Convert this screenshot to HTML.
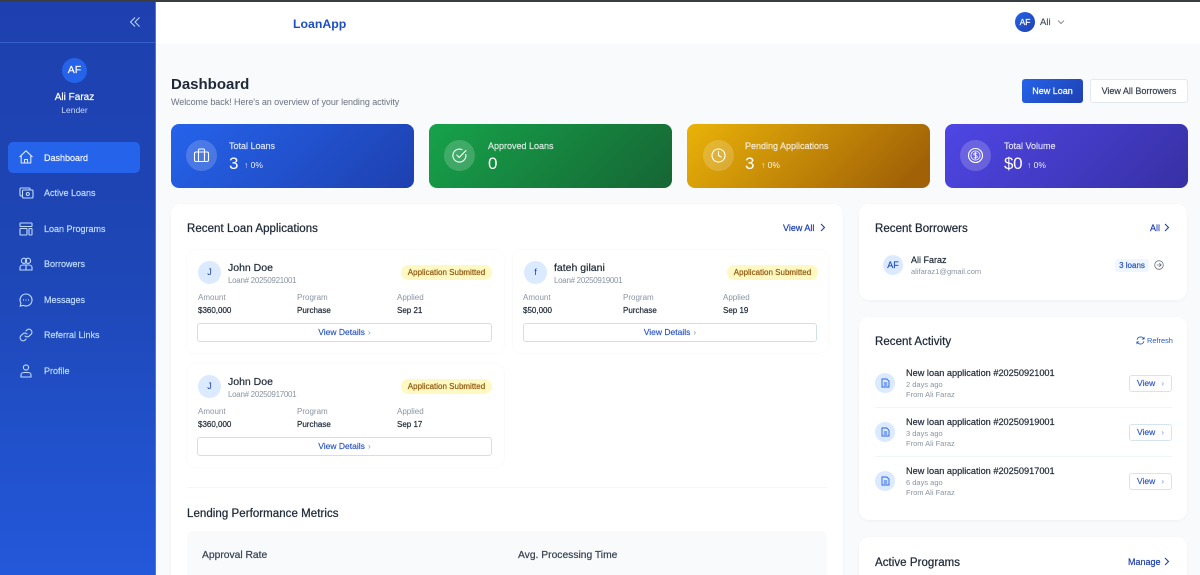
<!DOCTYPE html>
<html><head><meta charset="utf-8"><title>LoanApp Dashboard</title>
<style>
*{box-sizing:border-box;margin:0;padding:0}
html,body{width:1200px;height:575px;overflow:hidden;background:#f8fafc;font-family:"Liberation Sans",sans-serif}
#w{position:absolute;left:0;top:0;width:1200px;height:575px;overflow:hidden;background:#f8fafc;filter:blur(.25px)}
.a,.t,svg.i{position:absolute}
.t{white-space:nowrap;line-height:14px;height:14px}
.s{-webkit-text-stroke:.2px currentColor}
.card{background:#fff;border-radius:10px;box-shadow:0 1px 3px rgba(15,23,42,.04)}
.stat{top:124px;width:243px;height:64px;border-radius:8px}
.circ{top:140px;width:31px;height:31px;border-radius:50%;background:rgba(255,255,255,.18)}
.lab{font-size:9px;color:rgba(255,255,255,.78);top:139px;-webkit-text-stroke:.2px rgba(255,255,255,.78)}
.val{font-size:17px;color:#fff;top:157px;letter-spacing:-.3px}
.pct{font-size:8.5px;color:rgba(255,255,255,.9);top:158px}
.nav{font-size:9px;color:#bfdbfe;left:44px;-webkit-text-stroke:.2px currentColor}
.h2{font-size:11.5px;color:#1f2937;-webkit-text-stroke:.25px currentColor;letter-spacing:.05px}
.lnk{font-size:9px;color:#1e40af;-webkit-text-stroke:.2px currentColor}
.loan{width:317px;height:103px;background:#fff;border-radius:8px;box-shadow:0 0 2px rgba(15,23,42,.05)}
.av{width:23px;height:23px;border-radius:50%;background:#dbeafe;color:#1e40af;font-size:9px;text-align:center;line-height:23px}
.nm{font-size:10.5px;color:#1f2937;-webkit-text-stroke:.2px currentColor}
.sm{font-size:7.5px;color:#8a94a3}
.ln{font-size:8px;letter-spacing:-.3px;color:#8a94a3}
.lb{font-size:8px;color:#8a94a3}
.b{font-size:8px;color:#1f2937;-webkit-text-stroke:.2px currentColor}
.pill{width:91px;height:15px;background:#fef9c3;border-radius:8px;color:#92580e;font-size:8px;-webkit-text-stroke:.2px currentColor;text-align:center;line-height:15px}
.btn{width:295px;height:19px;border:1px solid #cfdff0;border-radius:3px;background:#fff;color:#2a55c0;font-size:8.5px;-webkit-text-stroke:.15px currentColor;text-align:center;line-height:17px}
.act{font-size:9.2px;color:#1f2937;-webkit-text-stroke:.2px currentColor}
.ic{width:20px;height:20px;border-radius:50%;background:#dbeafe;left:875px}
.vb{left:1129px;width:43px;height:17px;border:1px solid #d5e3f3;border-radius:3px;background:#fff;color:#2a55c0;font-size:8.5px;-webkit-text-stroke:.15px currentColor;line-height:15px;padding-left:7px}
.ar{color:#7f98d0;margin-left:3px;-webkit-text-stroke:0}
.vb .ar{margin-left:6px}
</style></head><body><div id="w">

<!-- main header -->
<div class="a" style="left:155px;top:0;width:1045px;height:44px;background:#fff"></div>
<div class="a" style="left:0;top:0;width:1200px;height:2px;background:#3a3d42;z-index:5"></div>

<!-- sidebar -->
<div class="a" style="left:0;top:0;width:156px;height:575px;background:linear-gradient(180deg,#1e40af 0%,#1e46b5 45%,#2358da 100%);border-right:1px solid #4a76e0"></div>
<div class="a" style="left:0;top:42px;width:155px;height:1px;background:#3560cc"></div>
<svg class="i" style="left:129px;top:16px" width="12" height="12" viewBox="0 0 12 12" fill="none" stroke="#bfdbfe" stroke-width="1"><path d="M6 1.500 1.500 6 6 10.500M10.500 1.500 6 6 10.500 10.500"/></svg>
<div class="a s" style="left:62px;top:58px;width:25px;height:25px;border-radius:50%;background:#2563eb;color:#fff;font-size:10.5px;text-align:center;line-height:25px">AF</div>
<div class="t s" style="left:0;width:149px;text-align:center;top:91px;font-size:10px;color:#fff">Ali Faraz</div>
<div class="t" style="left:0;width:149px;text-align:center;top:103px;font-size:8.5px;color:#c7d8f8">Lender</div>
<div class="a" style="left:8px;top:142px;width:132px;height:31px;border-radius:5px;background:#2563eb"></div>

<svg class="i" style="left:18px;top:149px" width="16" height="16" viewBox="0 0 16 16" fill="none" stroke="#dbeafe" stroke-width="1.100" stroke-linejoin="round"><path d="M1.500 8 8 1.800 14.500 8M3.200 6.800V14H12.800V6.800M6.500 14V10.500H9.500V14"/></svg>
<div class="t nav" style="top:151px;color:#eff6ff">Dashboard</div>

<svg class="i" style="left:19px;top:186px" width="15" height="14" viewBox="0 0 15 14" fill="none" stroke="#bfdbfe" stroke-width="1.100"><rect x="3.500" y="4" width="10.500" height="8" rx="1"/><path d="M3.500 10H2a1 1 0 0 1-1-1V3a1 1 0 0 1 1-1h8a1 1 0 0 1 1 1v1"/><circle cx="8.800" cy="8" r="1.500"/></svg>
<div class="t nav" style="top:186px">Active Loans</div>

<svg class="i" style="left:19px;top:222px" width="14" height="14" viewBox="0 0 14 14" fill="none" stroke="#bfdbfe" stroke-width="1.100"><rect x="1" y="1" width="12" height="3.500" rx=".5"/><rect x="1" y="6.500" width="7" height="6.500" rx=".5"/><rect x="10" y="6.500" width="3" height="6.500" rx=".5"/></svg>
<div class="t nav" style="top:222px">Loan Programs</div>

<svg class="i" style="left:19px;top:257px" width="14" height="14" viewBox="0 0 14 14" fill="none" stroke="#bfdbfe" stroke-width="1.100"><circle cx="5" cy="3.800" r="2.600"/><circle cx="9" cy="3.800" r="2.600"/><path d="M1 13V10.500C1 9 2.300 8 4 8H10C11.700 8 13 9 13 10.500V13ZM7 8.500V13"/></svg>
<div class="t nav" style="top:257px">Borrowers</div>

<svg class="i" style="left:19px;top:293px" width="14" height="14" viewBox="0 0 14 14" fill="none" stroke="#bfdbfe" stroke-width="1.100"><path d="M7 1a6 6 0 1 1-2.600 11.400L1.200 13l.7-2.900A6 6 0 0 1 7 1Z"/><path d="M4.500 7h.01M7 7h.01M9.500 7h.01" stroke-linecap="round" stroke-width="1.200"/></svg>
<div class="t nav" style="top:293px">Messages</div>

<svg class="i" style="left:19px;top:328px" width="14" height="14" viewBox="0 0 14 14" fill="none" stroke="#bfdbfe" stroke-width="1.100" stroke-linecap="round"><path d="M6 8a3 3 0 0 0 4.300 0l2-2A3 3 0 0 0 8.100 1.800L7 2.900"/><path d="M8 6a3 3 0 0 0-4.300 0l-2 2a3 3 0 0 0 4.200 4.200L7 11.100"/></svg>
<div class="t nav" style="top:328px">Referral Links</div>

<svg class="i" style="left:19px;top:364px" width="14" height="14" viewBox="0 0 14 14" fill="none" stroke="#bfdbfe" stroke-width="1.100"><circle cx="7" cy="3.500" r="2.600"/><path d="M2 13V11C2 9.500 3.300 8.500 5 8.500H9C10.700 8.500 12 9.500 12 11V13Z"/></svg>
<div class="t nav" style="top:364px">Profile</div>

<!-- top bar -->
<div class="t" style="left:293px;top:17px;font-size:12.300px;font-weight:bold;color:#1e4fbd">LoanApp</div>
<div class="a s" style="left:1015px;top:12px;width:20px;height:20px;border-radius:50%;background:linear-gradient(135deg,#2563eb,#1e40af);color:#fff;font-size:8.500px;text-align:center;line-height:20px">AF</div>
<div class="t s" style="left:1040px;top:16px;font-size:9.500px;color:#4b5563">Ali</div>
<svg class="i" style="left:1057px;top:18px" width="8" height="8" viewBox="0 0 8 8" fill="none" stroke="#6b7280" stroke-width=".8"><path d="M1 2.500 4 5.500 7 2.500"/></svg>

<!-- heading -->
<div class="t" style="left:171px;top:76px;height:18px;line-height:18px;font-size:15px;font-weight:bold;color:#1f2937">Dashboard</div>
<div class="t" style="left:171px;top:95px;font-size:9px;letter-spacing:-.06px;color:#6b7280">Welcome back! Here's an overview of your lending activity</div>
<div class="a s" style="left:1022px;top:79px;width:61px;height:24px;border-radius:3px;background:linear-gradient(135deg,#2563eb,#1e40af);color:#fff;font-size:9px;text-align:center;line-height:24px">New Loan</div>
<div class="a s" style="left:1090px;top:79px;width:98px;height:24px;border-radius:3px;background:#fff;border:1px solid #e2e8f0;color:#374151;font-size:9px;text-align:center;line-height:22px">View All Borrowers</div>

<!-- stats -->
<div class="a stat" style="left:171px;background:linear-gradient(135deg,#2563eb,#1e40af)"></div>
<div class="a stat" style="left:429px;background:linear-gradient(135deg,#16a34a,#166534)"></div>
<div class="a stat" style="left:687px;background:linear-gradient(135deg,#eab308,#a16207 90%)"></div>
<div class="a stat" style="left:945px;background:linear-gradient(135deg,#4f46e5,#3730a3)"></div>
<div class="a circ" style="left:186px"></div>
<div class="a circ" style="left:444px"></div>
<div class="a circ" style="left:703px"></div>
<div class="a circ" style="left:960px"></div>
<svg class="i" style="left:193px;top:147px" width="17" height="17" viewBox="0 0 17 17" fill="none" stroke="#fff" stroke-width="1.100"><rect x="1.500" y="5" width="14" height="9.500" rx="1.500"/><path d="M5.500 5V3a1 1 0 0 1 1-1h4a1 1 0 0 1 1 1v2M5.500 5v9.500M11.500 5v9.500"/></svg>
<svg class="i" style="left:451px;top:147px" width="17" height="17" viewBox="0 0 17 17" fill="none" stroke="#fff" stroke-width="1.100" stroke-linecap="round"><path d="M14.800 7.500A6.500 6.500 0 1 1 11 2.600"/><path d="M5.800 8 8.200 10.500 15 3.500"/></svg>
<svg class="i" style="left:710px;top:147px" width="17" height="17" viewBox="0 0 17 17" fill="none" stroke="#fff" stroke-width="1.100" stroke-linecap="round"><circle cx="8.500" cy="8.500" r="6.500"/><path d="M8.500 4.500V8.500L11.200 10"/></svg>
<svg class="i" style="left:967px;top:147px" width="17" height="17" viewBox="0 0 17 17" fill="none" stroke="#fff" stroke-width="1.100"><circle cx="8.500" cy="8.500" r="7"/><circle cx="8.500" cy="8.500" r="4.600" stroke-width=".8"/><path d="M10.300 6.500C9.500 5.700 6.800 5.800 6.800 7.200 6.800 8.800 10.300 8 10.300 9.800 10.300 11.200 7.500 11.300 6.700 10.500M8.500 4.800V12.200" stroke-width=".8"/></svg>

<div class="t lab" style="left:229px">Total Loans</div>
<div class="t val" style="left:229px">3</div>
<div class="t pct" style="left:244px">↑ 0%</div>
<div class="t lab" style="left:488px">Approved Loans</div>
<div class="t val" style="left:488px">0</div>
<div class="t lab" style="left:745px">Pending Applications</div>
<div class="t val" style="left:745px">3</div>
<div class="t pct" style="left:761px">↑ 0%</div>
<div class="t lab" style="left:1004px">Total Volume</div>
<div class="t val" style="left:1004px">$0</div>
<div class="t pct" style="left:1027px">↑ 0%</div>

<!-- main card -->
<div class="a card" style="left:171px;top:204px;width:672px;height:380px"></div>
<div class="t h2" style="left:187px;top:222px">Recent Loan Applications</div>
<div class="t lnk" style="left:783px;top:221px">View All</div>
<svg class="i" style="left:819px;top:223px" width="7" height="9" viewBox="0 0 7 9" fill="none" stroke="#1e40af" stroke-width="1.100"><path d="M2 1 5.500 4.500 2 8"/></svg>

<!-- loan 1 -->
<div class="a loan" style="left:187px;top:250px"></div>
<div class="a av" style="left:198px;top:261px">J</div>
<div class="t nm" style="left:228px;top:261px">John Doe</div>
<div class="t ln" style="left:228px;top:274px">Loan# 20250921001</div>
<div class="a pill" style="left:401px;top:265px">Application Submitted</div>
<div class="t lb" style="left:198px;top:291px">Amount</div>
<div class="t lb" style="left:297px;top:291px">Program</div>
<div class="t lb" style="left:397px;top:291px">Applied</div>
<div class="t b" style="left:198px;top:304px">$360,000</div>
<div class="t b" style="left:297px;top:304px">Purchase</div>
<div class="t b" style="left:397px;top:304px">Sep 21</div>
<div class="a btn" style="left:197px;top:323px">View Details<span class="ar">›</span></div>

<!-- loan 2 -->
<div class="a loan" style="left:513px;top:250px;width:315px"></div>
<div class="a av" style="left:524px;top:261px">f</div>
<div class="t nm" style="left:554px;top:261px">fateh gilani</div>
<div class="t ln" style="left:554px;top:274px">Loan# 20250919001</div>
<div class="a pill" style="left:727px;top:265px">Application Submitted</div>
<div class="t lb" style="left:523px;top:291px">Amount</div>
<div class="t lb" style="left:623px;top:291px">Program</div>
<div class="t lb" style="left:723px;top:291px">Applied</div>
<div class="t b" style="left:523px;top:304px">$50,000</div>
<div class="t b" style="left:623px;top:304px">Purchase</div>
<div class="t b" style="left:723px;top:304px">Sep 19</div>
<div class="a btn" style="left:523px;top:323px;width:294px">View Details<span class="ar">›</span></div>

<!-- loan 3 -->
<div class="a loan" style="left:187px;top:364px"></div>
<div class="a av" style="left:198px;top:375px">J</div>
<div class="t nm" style="left:228px;top:375px">John Doe</div>
<div class="t ln" style="left:228px;top:388px">Loan# 20250917001</div>
<div class="a pill" style="left:401px;top:379px">Application Submitted</div>
<div class="t lb" style="left:198px;top:405px">Amount</div>
<div class="t lb" style="left:297px;top:405px">Program</div>
<div class="t lb" style="left:397px;top:405px">Applied</div>
<div class="t b" style="left:198px;top:418px">$360,000</div>
<div class="t b" style="left:297px;top:418px">Purchase</div>
<div class="t b" style="left:397px;top:418px">Sep 17</div>
<div class="a btn" style="left:197px;top:437px">View Details<span class="ar">›</span></div>

<div class="a" style="left:187px;top:487px;width:640px;height:1px;background:#f3f6fa"></div>
<div class="t h2" style="left:187px;top:507px">Lending Performance Metrics</div>
<div class="a" style="left:187px;top:531px;width:640px;height:60px;background:#f8fafc;border-radius:6px"></div>
<div class="t s" style="left:202px;top:549px;font-size:10.300px;color:#374151">Approval Rate</div>
<div class="t s" style="left:518px;top:549px;font-size:10.300px;color:#374151">Avg. Processing Time</div>

<!-- borrowers -->
<div class="a card" style="left:859px;top:204px;width:328px;height:96px"></div>
<div class="t h2" style="left:875px;top:222px">Recent Borrowers</div>
<div class="t lnk" style="left:1150px;top:221px">All</div>
<svg class="i" style="left:1163px;top:223px" width="7" height="9" viewBox="0 0 7 9" fill="none" stroke="#1e40af" stroke-width="1.100"><path d="M2 1 5.500 4.500 2 8"/></svg>
<div class="a s" style="left:883px;top:255px;width:20px;height:20px;border-radius:50%;background:#dbeafe;color:#1e4fbd;font-size:9px;text-align:center;line-height:20px">AF</div>
<div class="t s" style="left:911px;top:253px;font-size:9px;color:#1f2937">Ali Faraz</div>
<div class="t sm" style="left:911px;top:265px">alifaraz1@gmail.com</div>
<div class="a s" style="left:1115px;top:259px;width:34px;height:13px;background:#eff6ff;border-radius:3px;color:#2a55c0;font-size:8px;text-align:center;line-height:13px">3 loans</div>
<svg class="i" style="left:1154px;top:260px" width="10" height="10" viewBox="0 0 10 10" fill="none" stroke="#6b7280" stroke-width=".8"><circle cx="5" cy="5" r="4.300"/><path d="M2.800 5H7.200M5.300 3.200 7.200 5 5.300 6.800"/></svg>

<!-- activity -->
<div class="a card" style="left:859px;top:317px;width:328px;height:203px"></div>
<div class="t h2" style="left:875px;top:335px">Recent Activity</div>
<svg class="i" style="left:1136px;top:336px" width="9" height="9" viewBox="0 0 10 10" fill="none" stroke="#1e4fbd" stroke-width=".9"><path d="M1.200 4.200A4 4 0 0 1 8.200 2.500L9 3.500M9 1V3.500H6.500M8.800 5.800A4 4 0 0 1 1.800 7.500L1 6.500M1 9V6.500H3.500"/></svg>
<div class="t" style="left:1147px;top:334px;font-size:7.400px;color:#2b5cc4">Refresh</div>

<div class="a ic" style="top:373px"></div>
<div class="t act" style="left:906px;top:366px">New loan application #20250921001</div>
<div class="t sm" style="left:906px;top:378px">2 days ago</div>
<div class="t sm" style="left:906px;top:388px">From Ali Faraz</div>
<div class="a vb" style="top:375px">View<span class="ar">›</span></div>
<div class="a" style="left:875px;top:407px;width:297px;height:1px;background:#f1f5f9"></div>

<div class="a ic" style="top:422px"></div>
<div class="t act" style="left:906px;top:415px">New loan application #20250919001</div>
<div class="t sm" style="left:906px;top:427px">3 days ago</div>
<div class="t sm" style="left:906px;top:437px">From Ali Faraz</div>
<div class="a vb" style="top:424px">View<span class="ar">›</span></div>
<div class="a" style="left:875px;top:456px;width:297px;height:1px;background:#f1f5f9"></div>

<div class="a ic" style="top:471px"></div>
<div class="t act" style="left:906px;top:464px">New loan application #20250917001</div>
<div class="t sm" style="left:906px;top:476px">6 days ago</div>
<div class="t sm" style="left:906px;top:486px">From Ali Faraz</div>
<div class="a vb" style="top:473px">View<span class="ar">›</span></div>

<svg class="i" style="left:881px;top:378px" width="9" height="10" viewBox="0 0 9 10" fill="none" stroke="#2563eb" stroke-width=".9"><path d="M1 1H5.800L8 3.200V9H1ZM2.800 5H6.200M2.800 7H6.200"/></svg>
<svg class="i" style="left:881px;top:427px" width="9" height="10" viewBox="0 0 9 10" fill="none" stroke="#2563eb" stroke-width=".9"><path d="M1 1H5.800L8 3.200V9H1ZM2.800 5H6.200M2.800 7H6.200"/></svg>
<svg class="i" style="left:881px;top:476px" width="9" height="10" viewBox="0 0 9 10" fill="none" stroke="#2563eb" stroke-width=".9"><path d="M1 1H5.800L8 3.200V9H1ZM2.800 5H6.200M2.800 7H6.200"/></svg>

<!-- programs -->
<div class="a card" style="left:859px;top:537px;width:328px;height:60px"></div>
<div class="t h2" style="left:875px;top:556px">Active Programs</div>
<div class="t lnk" style="left:1128px;top:555px">Manage</div>
<svg class="i" style="left:1163px;top:557px" width="7" height="9" viewBox="0 0 7 9" fill="none" stroke="#1e40af" stroke-width="1.100"><path d="M2 1 5.500 4.500 2 8"/></svg>
</div></body></html>
